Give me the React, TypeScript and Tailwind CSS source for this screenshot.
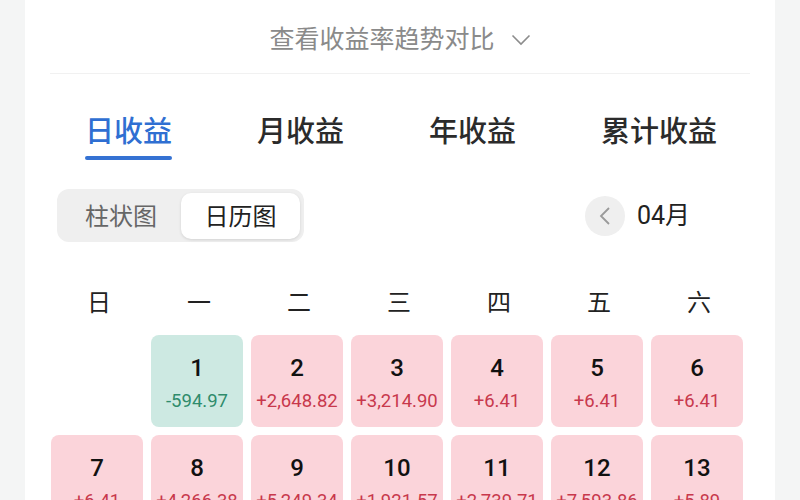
const CJK = "font-['Noto_Sans','Noto_Sans_CJK_SC',sans-serif]";
const NUM = "font-['Roboto','Noto_Sans_CJK_SC',sans-serif]";

const WEEK = ["日", "一", "二", "三", "四", "五", "六"];

type Day = { d: number; v: string } | null;

const DAYS: Day[] = [
  null,
  { d: 1, v: "-594.97" },
  { d: 2, v: "+2,648.82" },
  { d: 3, v: "+3,214.90" },
  { d: 4, v: "+6.41" },
  { d: 5, v: "+6.41" },
  { d: 6, v: "+6.41" },
  { d: 7, v: "+6.41" },
  { d: 8, v: "+4,266.38" },
  { d: 9, v: "+5,249.34" },
  { d: 10, v: "+1,921.57" },
  { d: 11, v: "+2,739.71" },
  { d: 12, v: "+7,593.86" },
  { d: 13, v: "+5.89" },
];

const TABS = ["日收益", "月收益", "年收益", "累计收益"];

function DayCell({ day }: { day: Day }) {
  if (!day) return <div className="h-[92px]" />;
  const down = day.v.startsWith("-");
  return (
    <div
      className={
        "h-[92px] rounded-[8px] flex flex-col items-center pt-[19px] " +
        (down ? "bg-[#cde9e2]" : "bg-[#fbd4da]")
      }
    >
      <span className={NUM + " text-[24px] leading-[28px] font-medium text-[#111]"}>{day.d}</span>
      <span
        className={
          NUM +
          " mt-[7px] text-[18.5px] leading-[24px] " +
          (down ? "text-[#2f8c6c]" : "text-[#c8384c]")
        }
      >
        {day.v}
      </span>
    </div>
  );
}

export default function App() {
  return (
    <div className={"h-[500px] w-[800px] overflow-hidden bg-[#f4f5f5] flex " + CJK}>
      <div className="ml-[25px] w-[750px] h-full bg-white">
        {/* trend compare */}
        <div className="mx-[25px] h-[74px] border-b border-[#f1f1f1] flex items-center justify-center gap-[16px] pt-[4px]">
          <span className="text-[25px] text-[#8a8a8a]">查看收益率趋势对比</span>
          <svg width="20" height="12" viewBox="0 0 20 12" className="mt-[2px]">
            <path d="M1.5 1.5 L10 10 L18.5 1.5" fill="none" stroke="#8c8c8c" strokeWidth="1.6" />
          </svg>
        </div>

        {/* tabs */}
        <div className="flex justify-between pl-[60px] pr-[58px] pt-[40px]">
          {TABS.map((t, i) => (
            <div key={t} className="flex flex-col items-stretch">
              <span
                className={
                  "text-[29px] leading-[34px] font-medium " +
                  (i === 0 ? "text-[#2f6fd2]" : "text-[#2b2b2b]")
                }
              >
                {t}
              </span>
              <div
                className={
                  "mt-[8px] h-[4px] rounded-full " + (i === 0 ? "bg-[#3572d3]" : "bg-transparent")
                }
              />
            </div>
          ))}
        </div>

        {/* view switch + month */}
        <div className="mt-[29px] flex items-center">
          <div className="ml-[32px] h-[53px] rounded-[12px] bg-[#efefef] flex items-center p-[4px]">
            <div className="w-[120px] text-center text-[24px] text-[#666]">柱状图</div>
            <div className="w-[119px] h-[46px] rounded-[10px] bg-white shadow-[0_1px_3px_rgba(0,0,0,0.12)] flex items-center justify-center text-[24px] text-[#222]">
              日历图
            </div>
          </div>
          <div className="ml-auto mr-[85px] flex items-center gap-[12px]">
            <div className="w-[40px] h-[40px] rounded-full bg-[#efefef] flex items-center justify-center">
              <svg width="12" height="20" viewBox="0 0 12 20">
                <path d="M10 2 L2 10 L10 18" fill="none" stroke="#9a9a9a" strokeWidth="1.8" />
              </svg>
            </div>
            <span className={NUM + " text-[25px] text-[#222]"}>04月</span>
          </div>
        </div>

        {/* calendar */}
        <div className="ml-[26px] w-[692px] mt-[40px]">
          <div className="grid grid-cols-7 gap-x-[8px] h-[40px] items-center">
            {WEEK.map((w) => (
              <div key={w} className="text-center text-[24px] text-[#222] pl-[4px]">
                {w}
              </div>
            ))}
          </div>
          <div className="mt-[13px] grid grid-cols-7 gap-[8px]">
            {DAYS.map((d, i) => (
              <DayCell key={i} day={d} />
            ))}
          </div>
        </div>
      </div>
    </div>
  );
}
